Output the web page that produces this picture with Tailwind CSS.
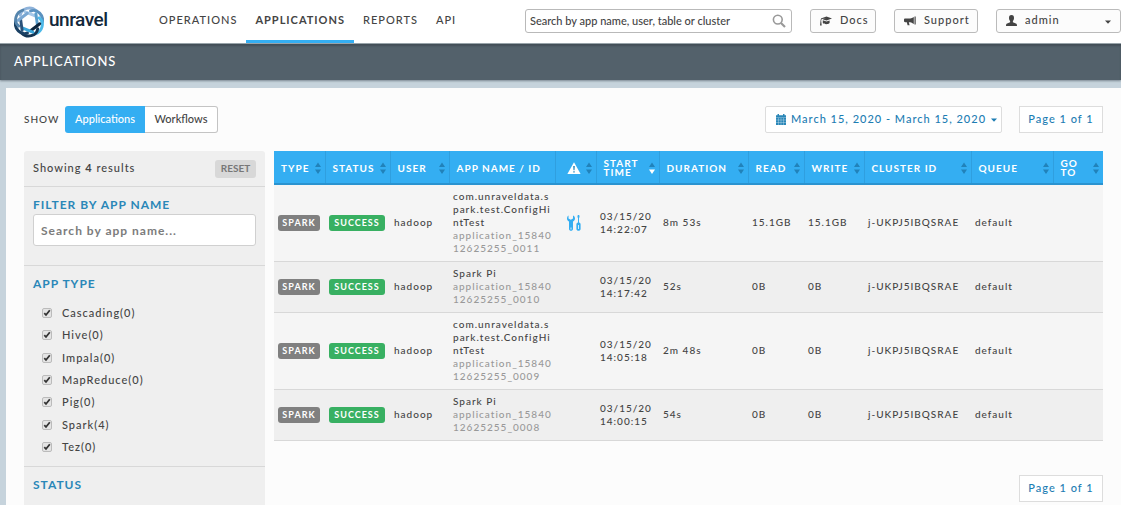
<!DOCTYPE html>
<html lang="en">
<head>
<meta charset="utf-8">
<meta name="viewport" content="width=device-width, initial-scale=1">
<title>Unravel - Applications</title>
<script src="https://cdn.jsdelivr.net/npm/@tailwindcss/browser@4"></script>
</head>
<body class="flex min-h-screen flex-col bg-[#c6d3dc] font-['Lato',sans-serif] text-[11px] font-medium tracking-[1px] text-[#444]">

<svg class="hidden" aria-hidden="true">
  <symbol id="sort" viewBox="0 0 6 12"><path d="M0 5 3 0.5 6 5zM0 7.5 3 12 6 7.5z" fill="#2182ba"/></symbol>
  <symbol id="sort-desc" viewBox="0 0 6 12"><path d="M0 5 3 0.5 6 5z" fill="#2182ba"/><path d="M0 7.5 3 12 6 7.5z" fill="#fff"/></symbol>
  <symbol id="caret" viewBox="0 0 6 4"><path d="M0 0.5h6L3 3.8z" fill="currentColor"/></symbol>
</svg>

<header class="flex h-11 items-stretch border-b border-[#9aa5ac] bg-white">
  <a href="#" class="flex w-[150px] shrink-0 items-center gap-[5px] pl-[14px]" aria-label="unravel">
    <svg class="h-8 w-[30px]" viewBox="-15.500 -16 31 32" fill="none" stroke-width="3" stroke-linecap="round" aria-hidden="true">
      <path d="M-9 -7C-8 -14.500 2 -17 7.500 -11.500" stroke="#8fb3da"/>
      <path d="M-9 -7C-8 -14.500 2 -17 7.500 -11.500" stroke="#5b92c0" transform="rotate(60)"/>
      <path d="M-9 -7C-8 -14.500 2 -17 7.500 -11.500" stroke="#4cb9e8" transform="rotate(120)"/>
      <path d="M-9 -7C-8 -14.500 2 -17 7.500 -11.500" stroke="#143452" transform="rotate(180)"/>
      <path d="M-9 -7C-8 -14.500 2 -17 7.500 -11.500" stroke="#1b4164" transform="rotate(240)"/>
      <path d="M-9 -7C-8 -14.500 2 -17 7.500 -11.500" stroke="#5585ad" transform="rotate(300)"/>
      <path d="M-4 -10.500 7 -6" stroke="#a6c8e8"/>
      <path d="M-4 -10.500 7 -6" stroke="#5b9fcc" transform="rotate(60)"/>
      <path d="M-4 -10.500 7 -6" stroke="#0d263e" transform="rotate(120)"/>
      <path d="M-4 -10.500 7 -6" stroke="#3aa6da" transform="rotate(180)"/>
      <path d="M-4 -10.500 7 -6" stroke="#2a527a" transform="rotate(240)"/>
      <path d="M-4 -10.500 7 -6" stroke="#79a7d2" transform="rotate(300)"/>
      <path d="M0 -6.500 5.600 -3.200V3.200L0 6.500 -5.600 3.200V-3.200z" fill="#fff"/>
    </svg>
    <span class="pb-[3px] font-['Roboto',sans-serif] text-[19px] font-medium tracking-tight text-[#13283b]">unravel</span>
  </a>
  <nav class="flex items-stretch text-[11px]" aria-label="Main">
    <a href="#" class="flex items-center border-b-3 border-transparent px-[9px]">OPERATIONS</a>
    <a href="#" class="flex items-center border-b-3 border-[#34aef2] px-[9px] font-bold" aria-current="page">APPLICATIONS</a>
    <a href="#" class="flex items-center border-b-3 border-transparent px-[9px]">REPORTS</a>
    <a href="#" class="flex items-center border-b-3 border-transparent px-[9px]">API</a>
  </nav>
  <div class="ml-auto flex items-center gap-[18px] pb-[2px]">
    <label class="relative block">
      <input type="search" aria-label="Search" placeholder="Search by app name, user, table or cluster" class="h-6 w-[267px] rounded-[3px] border border-[#b9b9b9] bg-white pr-7 pl-1 text-[11px] tracking-normal placeholder:text-[#444]">
      <svg class="absolute top-[5px] right-[6px] size-[14px]" viewBox="0 0 14 14" fill="none" stroke="#999" stroke-width="1.600" aria-hidden="true"><circle cx="5.800" cy="5.600" r="4.400"/><path d="m9 9 4 4" stroke-width="2.200"/></svg>
    </label>
    <button type="button" class="flex h-6 w-[66px] items-center gap-2 rounded-[3px] border border-[#bbb] bg-[#fcfcfc] pl-[9px]">
      <svg class="h-[10px] w-3" viewBox="0 0 12 10" fill="#444" aria-hidden="true"><path d="M6.500 0.500 12 2.500 6.500 4.600 2.500 3.200 6.500 2.500 1.800 2.900C1.300 3.500 1.200 4.200 1.200 5L1.700 9.500H0L0.500 5C0.500 4.100 0.700 3.300 1.100 2.700L0.800 2.500zM2.800 4.300 6.500 5.600 9.600 4.500V7C8 8.600 4.500 8.600 2.800 7z"/></svg>
      <span>Docs</span>
    </button>
    <button type="button" class="flex h-6 w-[84px] items-center gap-2 rounded-[3px] border border-[#bbb] bg-[#fcfcfc] pl-[9px]">
      <svg class="h-[10px] w-3" viewBox="0 0 12 10" fill="#444" aria-hidden="true"><path d="M10.500 0.500h1.200v8h-1.200zM9.800 1v7C8 6.600 6.500 6.200 4.800 6.200L5.600 9.200H3.600L2.800 6.200H1.200C0.400 6.200 0 5.700 0 5V3.800C0 3 0.500 2.600 1.200 2.600h3.600C6.500 2.600 8 2.200 9.800 1z"/></svg>
      <span>Support</span>
    </button>
    <label class="relative block">
      <svg class="absolute top-[6px] left-[10px] h-[11px] w-[11px]" viewBox="0 0 11 11" fill="#444" aria-hidden="true"><path d="M5.500 0C7.400 0 8 1.300 8 2.900 8 4.300 7.500 5.300 6.900 5.900V7.300L9.900 8.500C10.700 8.800 11 9.300 11 11H0C0 9.300 0.300 8.800 1.100 8.500L4.100 7.300V5.900C3.500 5.300 3 4.300 3 2.900 3 1.300 3.600 0 5.500 0z"/></svg>
      <select aria-label="Account" class="h-6 w-[125px] appearance-none rounded-[3px] border border-[#bbb] bg-[#fcfcfc] pl-7 text-[11px] tracking-[1px]"><option>admin</option></select>
      <svg class="absolute top-[11px] right-[10px] h-1 w-[6px]" aria-hidden="true"><use href="#caret"/></svg>
    </label>
  </div>
</header>

<div class="flex h-9 items-center bg-[#53616b] pl-[14px] shadow-[inset_0_2px_2px_#424e57,0_1px_2px_#7b8891]">
  <h1 class="text-[13px] font-medium text-white">APPLICATIONS</h1>
</div>

<main class="mt-2 ml-[6px] flex flex-1 flex-col bg-[#fcfcfc] pt-[18px] pr-[18px] pl-[18px]">
  <div class="mb-[18px] flex h-[27px] items-center">
    <span class="w-[41px] text-[10px]">SHOW</span>
    <div class="flex h-[27px] text-[11px] tracking-normal">
      <button type="button" class="w-20 rounded-l-[3px] bg-[#34aef2] text-white">Applications</button>
      <button type="button" class="w-[73px] rounded-r-[3px] border border-l-0 border-[#c4c4c4] bg-white">Workflows</button>
    </div>
    <button type="button" class="ml-auto flex h-[27px] w-[237px] items-center justify-between rounded-[2px] border border-[#ddd] bg-white pr-1 pl-[10px] whitespace-nowrap text-[#1d7db3]">
      <svg class="h-[11px] w-[10px] shrink-0" viewBox="0 0 10 11" aria-hidden="true"><path d="M0 1.200h1.500V0h1.500v1.200h4V0h1.500v1.200H10V11H0z" fill="#2a87b8"/><path d="M0 3.500h10M0 6h10M0 8.500h10M2.500 4v7M5 4v7M7.500 4v7" stroke="#fff" stroke-opacity=".5" stroke-width=".6"/></svg>
      <span>March 15, 2020 - March 15, 2020</span>
      <svg class="h-1 w-[6px] shrink-0" aria-hidden="true"><use href="#caret"/></svg>
    </button>
    <button type="button" class="ml-[17px] h-[27px] w-[84px] border border-[#ddd] bg-white text-[#1d7db3]">Page 1 of 1</button>
  </div>

  <div class="flex flex-1 items-stretch gap-[9px]">
    <aside class="w-[241px] shrink-0 rounded-t-[3px] bg-[#efefef]">
      <div class="flex h-9 items-center justify-between border-b border-[#d8d8d8] px-[9px]">
        <p>Showing <b>4</b> results</p>
        <button type="button" class="h-[18px] w-[41px] rounded-[3px] bg-[#d8d8d8] text-[10px] font-bold tracking-normal text-[#777]">RESET</button>
      </div>
      <section class="h-[79px] border-b border-[#d8d8d8] px-[9px] pt-[10px]">
        <label for="app-filter" class="block text-[12px] leading-4 font-bold text-[#2a87b8]">FILTER BY APP NAME</label>
        <input id="app-filter" type="text" placeholder="Search by app name..." class="mt-px h-8 w-full rounded-[3px] border border-[#d0d0d0] bg-white pl-[7px] text-[12px] font-bold placeholder:text-[#7c7c7c]">
      </section>
      <section class="h-[201px] border-b border-[#d8d8d8] px-[9px] pt-[10px]">
        <h2 class="text-[12px] leading-4 font-bold text-[#2a87b8]">APP TYPE</h2>
        <ul class="mt-[10px] flex h-[156px] flex-col justify-between pl-[9px] leading-[22px]">
          <li><label class="flex items-center gap-[10px]"><span class="relative block size-[10px]"><input type="checkbox" checked class="block size-[10px] appearance-none rounded-[2px] border border-[#bbb] bg-[#e4e4e4]"><svg class="pointer-events-none absolute inset-0" viewBox="0 0 10 10" fill="none" stroke="#333" stroke-width="1.800" aria-hidden="true"><path d="m2.300 5.200 1.700 1.800L7.800 2.300"/></svg></span>Cascading(0)</label></li>
          <li><label class="flex items-center gap-[10px]"><span class="relative block size-[10px]"><input type="checkbox" checked class="block size-[10px] appearance-none rounded-[2px] border border-[#bbb] bg-[#e4e4e4]"><svg class="pointer-events-none absolute inset-0" viewBox="0 0 10 10" fill="none" stroke="#333" stroke-width="1.800" aria-hidden="true"><path d="m2.300 5.200 1.700 1.800L7.800 2.300"/></svg></span>Hive(0)</label></li>
          <li><label class="flex items-center gap-[10px]"><span class="relative block size-[10px]"><input type="checkbox" checked class="block size-[10px] appearance-none rounded-[2px] border border-[#bbb] bg-[#e4e4e4]"><svg class="pointer-events-none absolute inset-0" viewBox="0 0 10 10" fill="none" stroke="#333" stroke-width="1.800" aria-hidden="true"><path d="m2.300 5.200 1.700 1.800L7.800 2.300"/></svg></span>Impala(0)</label></li>
          <li><label class="flex items-center gap-[10px]"><span class="relative block size-[10px]"><input type="checkbox" checked class="block size-[10px] appearance-none rounded-[2px] border border-[#bbb] bg-[#e4e4e4]"><svg class="pointer-events-none absolute inset-0" viewBox="0 0 10 10" fill="none" stroke="#333" stroke-width="1.800" aria-hidden="true"><path d="m2.300 5.200 1.700 1.800L7.800 2.300"/></svg></span>MapReduce(0)</label></li>
          <li><label class="flex items-center gap-[10px]"><span class="relative block size-[10px]"><input type="checkbox" checked class="block size-[10px] appearance-none rounded-[2px] border border-[#bbb] bg-[#e4e4e4]"><svg class="pointer-events-none absolute inset-0" viewBox="0 0 10 10" fill="none" stroke="#333" stroke-width="1.800" aria-hidden="true"><path d="m2.300 5.200 1.700 1.800L7.800 2.300"/></svg></span>Pig(0)</label></li>
          <li><label class="flex items-center gap-[10px]"><span class="relative block size-[10px]"><input type="checkbox" checked class="block size-[10px] appearance-none rounded-[2px] border border-[#bbb] bg-[#e4e4e4]"><svg class="pointer-events-none absolute inset-0" viewBox="0 0 10 10" fill="none" stroke="#333" stroke-width="1.800" aria-hidden="true"><path d="m2.300 5.200 1.700 1.800L7.800 2.300"/></svg></span>Spark(4)</label></li>
          <li><label class="flex items-center gap-[10px]"><span class="relative block size-[10px]"><input type="checkbox" checked class="block size-[10px] appearance-none rounded-[2px] border border-[#bbb] bg-[#e4e4e4]"><svg class="pointer-events-none absolute inset-0" viewBox="0 0 10 10" fill="none" stroke="#333" stroke-width="1.800" aria-hidden="true"><path d="m2.300 5.200 1.700 1.800L7.800 2.300"/></svg></span>Tez(0)</label></li>
        </ul>
      </section>
      <section class="px-[9px] pt-[10px] pb-2">
        <h2 class="text-[12px] leading-4 font-bold text-[#2a87b8]">STATUS</h2>
      </section>
    </aside>

    <div class="flex min-w-0 flex-1 flex-col">
      <table class="w-full table-fixed border-collapse text-left text-[10px] leading-[13px] [&_td]:pt-[5px] [&_td]:pb-[6px] [&_td]:pl-1">
        <colgroup>
          <col class="w-[51px]"><col class="w-[65px]"><col class="w-[59px]"><col class="w-[106px]"><col class="w-[41px]"><col class="w-[63px]"><col class="w-[89px]"><col class="w-[56px]"><col class="w-[60px]"><col class="w-[107px]"><col class="w-[82px]"><col class="w-[50px]">
        </colgroup>
        <thead class="bg-[#34aef2] leading-[9px] text-white [&_th]:h-[33px] [&_th]:border-b-2 [&_th]:border-b-[#2a93d0] [&_th]:pt-[2px] [&_th]:pr-1 [&_th]:pl-[7px] [&_th]:font-bold [&_th+th]:border-l [&_th+th]:border-l-[#2f9fdf]">
          <tr>
            <th scope="col"><div class="flex items-center justify-between">TYPE<svg class="h-3 w-[6px] shrink-0" aria-hidden="true"><use href="#sort"/></svg></div></th>
            <th scope="col"><div class="flex items-center justify-between">STATUS<svg class="h-3 w-[6px] shrink-0" aria-hidden="true"><use href="#sort"/></svg></div></th>
            <th scope="col"><div class="flex items-center justify-between">USER<svg class="h-3 w-[6px] shrink-0" aria-hidden="true"><use href="#sort"/></svg></div></th>
            <th scope="col">APP NAME / ID</th>
            <th scope="col"><div class="flex items-center justify-between pl-1"><svg class="h-3 w-[14px] shrink-0" viewBox="0 0 14 12" role="img" aria-label="Events"><path d="M7 0.300 13.600 12H0.400z" fill="#fff"/><path d="M6.200 4h1.600L7.500 8.300h-1zM6.300 9.200h1.400v1.400H6.300z" fill="#2182ba"/></svg><svg class="h-3 w-[6px] shrink-0" aria-hidden="true"><use href="#sort"/></svg></div></th>
            <th scope="col"><div class="flex items-center justify-between">START TIME<svg class="h-3 w-[6px] shrink-0" aria-hidden="true"><use href="#sort-desc"/></svg></div></th>
            <th scope="col"><div class="flex items-center justify-between">DURATION<svg class="h-3 w-[6px] shrink-0" aria-hidden="true"><use href="#sort"/></svg></div></th>
            <th scope="col"><div class="flex items-center justify-between">READ<svg class="h-3 w-[6px] shrink-0" aria-hidden="true"><use href="#sort"/></svg></div></th>
            <th scope="col"><div class="flex items-center justify-between">WRITE<svg class="h-3 w-[6px] shrink-0" aria-hidden="true"><use href="#sort"/></svg></div></th>
            <th scope="col"><div class="flex items-center justify-between">CLUSTER ID<svg class="h-3 w-[6px] shrink-0" aria-hidden="true"><use href="#sort"/></svg></div></th>
            <th scope="col"><div class="flex items-center justify-between">QUEUE<svg class="h-3 w-[6px] shrink-0" aria-hidden="true"><use href="#sort"/></svg></div></th>
            <th scope="col"><div class="flex items-center justify-between"><span class="w-5">GO TO</span><svg class="h-3 w-[6px] shrink-0" aria-hidden="true"><use href="#sort"/></svg></div></th>
          </tr>
        </thead>
        <tbody class="font-medium [&_tr]:border-b [&_tr]:border-[#d8d8d8]">
          <tr class="bg-[#f5f5f5]">
            <td><span class="block h-4 w-[42px] rounded-[3px] bg-[#808080] text-center text-[9px] leading-4 font-bold text-white">SPARK</span></td>
            <td><span class="block h-4 w-14 rounded-[3px] bg-[#38b062] text-center text-[9px] leading-4 font-bold text-white">SUCCESS</span></td>
            <td>hadoop</td>
            <td class="break-all">com.unraveldata.spark.test.ConfigHintTest<br><span class="text-[#999]">application_1584012625255_0011</span></td>
            <td><svg class="ml-2 h-4 w-[14px]" viewBox="0 0 14 16" fill="#34aef2" role="img" aria-label="Tuning suggestions"><path d="M1.500 0.500V3.500L3.800 4.800 6 3.500V0.500C7.500 1.200 8 2.400 8 3.600 8 5 7.200 6 6 6.600V14C6 16.400 2 16.400 2 14V6.600C0.700 6 0 5 0 3.600 0 2.400 0.500 1.200 1.500 0.500zM10.800 0h1.400L12.600 2 12 3V7.500C13.200 7.700 13.600 8.400 13.600 9.500V14C13.600 16.400 9.400 16.400 9.400 14V9.500C9.400 8.400 9.900 7.700 11 7.500V3L10.400 2z"/><path d="M11.500 10v4M4 12.500v2" stroke="#fff" stroke-width=".8"/></svg></td>
            <td>03/15/20 14:22:07</td><td>8m 53s</td><td>15.1GB</td><td>15.1GB</td><td>j-UKPJ5IBQSRAE</td><td>default</td><td></td>
          </tr>
          <tr class="bg-[#efefef]">
            <td><span class="block h-4 w-[42px] rounded-[3px] bg-[#808080] text-center text-[9px] leading-4 font-bold text-white">SPARK</span></td>
            <td><span class="block h-4 w-14 rounded-[3px] bg-[#38b062] text-center text-[9px] leading-4 font-bold text-white">SUCCESS</span></td>
            <td>hadoop</td>
            <td class="break-all">Spark Pi<br><span class="text-[#999]">application_1584012625255_0010</span></td>
            <td></td>
            <td>03/15/20 14:17:42</td><td>52s</td><td>0B</td><td>0B</td><td>j-UKPJ5IBQSRAE</td><td>default</td><td></td>
          </tr>
          <tr class="bg-[#f5f5f5]">
            <td><span class="block h-4 w-[42px] rounded-[3px] bg-[#808080] text-center text-[9px] leading-4 font-bold text-white">SPARK</span></td>
            <td><span class="block h-4 w-14 rounded-[3px] bg-[#38b062] text-center text-[9px] leading-4 font-bold text-white">SUCCESS</span></td>
            <td>hadoop</td>
            <td class="break-all">com.unraveldata.spark.test.ConfigHintTest<br><span class="text-[#999]">application_1584012625255_0009</span></td>
            <td></td>
            <td>03/15/20 14:05:18</td><td>2m 48s</td><td>0B</td><td>0B</td><td>j-UKPJ5IBQSRAE</td><td>default</td><td></td>
          </tr>
          <tr class="bg-[#efefef]">
            <td><span class="block h-4 w-[42px] rounded-[3px] bg-[#808080] text-center text-[9px] leading-4 font-bold text-white">SPARK</span></td>
            <td><span class="block h-4 w-14 rounded-[3px] bg-[#38b062] text-center text-[9px] leading-4 font-bold text-white">SUCCESS</span></td>
            <td>hadoop</td>
            <td class="break-all">Spark Pi<br><span class="text-[#999]">application_1584012625255_0008</span></td>
            <td></td>
            <td>03/15/20 14:00:15</td><td>54s</td><td>0B</td><td>0B</td><td>j-UKPJ5IBQSRAE</td><td>default</td><td></td>
          </tr>
        </tbody>
      </table>
      <button type="button" class="mt-[34px] h-[27px] w-[84px] self-end border border-[#ddd] bg-white text-[#1d7db3]">Page 1 of 1</button>
    </div>
  </div>
</main>
</body>
</html>
